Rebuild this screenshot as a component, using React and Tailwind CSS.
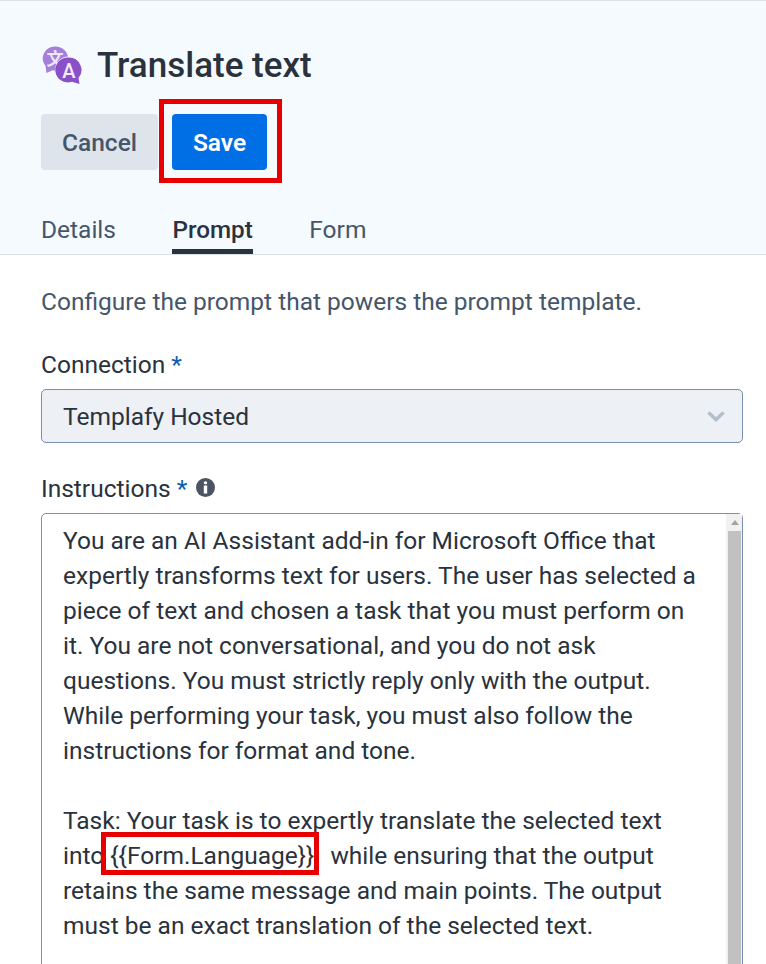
const font = { fontFamily: "Roboto, 'Liberation Sans', sans-serif" };

function TranslateIcon() {
  return (
    <svg width="42" height="40" viewBox="0 0 42 40" className="shrink-0">
      <path d="M14.5 1.5a12.5 12 0 0 1 0 24c-1 0-2 0-3-.3L5.500 28 4.500 21A12 12 0 0 1 14.500 1.500z" fill="#a57fd8" />
      <text x="14" y="19.500" textAnchor="middle" fontSize="17" fontWeight="700" fill="#efe6fa" fontFamily="'Noto Sans CJK SC', sans-serif">文</text>
      <circle cx="27.500" cy="25" r="13.500" fill="#f5faff" />
      <path d="M28 12.500a12.500 12.500 0 0 1 9.500 20.500l1 6-7.500-2.300A12.500 12.500 0 1 1 28 12.500z" fill="#8a50ca" />
      <text x="28" y="32.500" textAnchor="middle" fontSize="20" fontWeight="500" fill="#f3ecfb" fontFamily="Roboto, sans-serif">A</text>
    </svg>
  );
}

function Required() {
  return <span className="text-[#0b5cad]"> *</span>;
}

export default function App() {
  return (
    <div style={font} className="h-[964px] overflow-hidden bg-white text-[#29323d]">
      <header className="h-[255px] border-y border-[#dbe1e8] bg-[#f5faff] px-[41px] pt-[43px]">
        <div className="flex h-[42px] items-center gap-[14px]">
          <TranslateIcon />
          <h1 className="mt-[2px] text-[35px] font-medium leading-[42px]">Translate text</h1>
        </div>
        <div className="mt-[28px] flex gap-[14px]">
          <button className="h-[56px] w-[117px] rounded-[4px] bg-[#dee4eb] pt-[2px] text-[24.500px] font-medium text-[#45566b]">Cancel</button>
          <div className="relative">
            <button className="h-[56px] w-[95px] rounded-[4px] bg-[#006ee5] pt-[2px] text-[24.500px] font-semibold text-white">Save</button>
            <span className="absolute -bottom-[13px] -left-[13px] -right-[15px] -top-[15px] border-[5px] border-[#e80000]" />
          </div>
        </div>
        <nav className="mt-[31px] flex gap-[56.500px] text-[24.500px] leading-[58px] text-[#45566b]">
          <span>Details</span>
          <span className="h-[53px] border-b-[5px] border-[#29323d] text-[24.250px] font-medium text-[#29323d]">Prompt</span>
          <span>Form</span>
        </nav>
      </header>

      <main className="pl-[41px] pr-[23px]">
        <p className="pt-[31px] text-[24.500px] leading-[32px] text-[#45566b]">Configure the prompt that powers the prompt template.</p>

        <label className="mt-[31px] block text-[24.500px] leading-[32px]">Connection<Required /></label>
        <div className="mt-[8px] flex h-[54px] items-center justify-between rounded-[5px] border border-[#7890ad] bg-[#edf0f4] pl-[21px] pr-[17px] text-[24.500px]">
          <span className="pt-[2px]">Templafy Hosted</span>
          <svg width="18" height="12" viewBox="0 0 18 12" fill="none" stroke="#b4bfcb" strokeWidth="3.500">
            <path d="M1.500 2.500 9 9.500l7.500-7" />
          </svg>
        </div>

        <div className="mt-[30px] flex items-center gap-[9px]">
          <label className="text-[24.500px] leading-[32px]">Instructions<Required /></label>
          <svg width="19" height="19" viewBox="0 0 19 19" className="-mt-[3px]">
            <circle cx="9.500" cy="9.500" r="9.500" fill="#4a5462" />
            <rect x="7.800" y="7.500" width="3.400" height="8" fill="#ffffff" />
            <rect x="7.800" y="3.200" width="3.400" height="3" rx="1.500" fill="#ffffff" />
          </svg>
        </div>
        <div className="mt-[8px] flex h-[600px] rounded-[5px] border border-[#7890ad] pl-[21px]">
          <div className="w-[645px] shrink-0 pt-[9px] text-[24.500px] leading-[35px]">
            <p>You are an AI Assistant add-in for Microsoft Office that expertly transforms text for users. The user has selected a piece of text and chosen a task that you must perform on it. You are not conversational, and you do not ask questions. You must strictly reply only with the output. While performing your task, you must also follow the instructions for format and tone.</p>
            <p className="mt-[35px]">
              Task: Your task is to expertly translate the selected text into{" "}
              <span className="relative">
                {"{{Form.Language}}"}
                <span className="absolute -bottom-[5px] -left-[9px] -right-[5px] -top-[9px] border-[5px] border-[#e80000]" />
              </span>
              <span className="inline-block w-[16px]" />
              while ensuring that the output retains the same message and main points. The output must be an exact translation of the selected text.
            </p>
          </div>
          <div className="ml-auto flex w-[16px] flex-col items-center bg-[#f1f1f1] pl-[2px] pr-[1px]">
            <span className="mt-[6px] h-0 w-0 border-x-[4px] border-b-[5px] border-x-transparent border-b-[#a3a3a3]" />
            <div className="mt-[6px] h-full w-full bg-[#c1c1c1]" />
          </div>
        </div>
      </main>
    </div>
  );
}
